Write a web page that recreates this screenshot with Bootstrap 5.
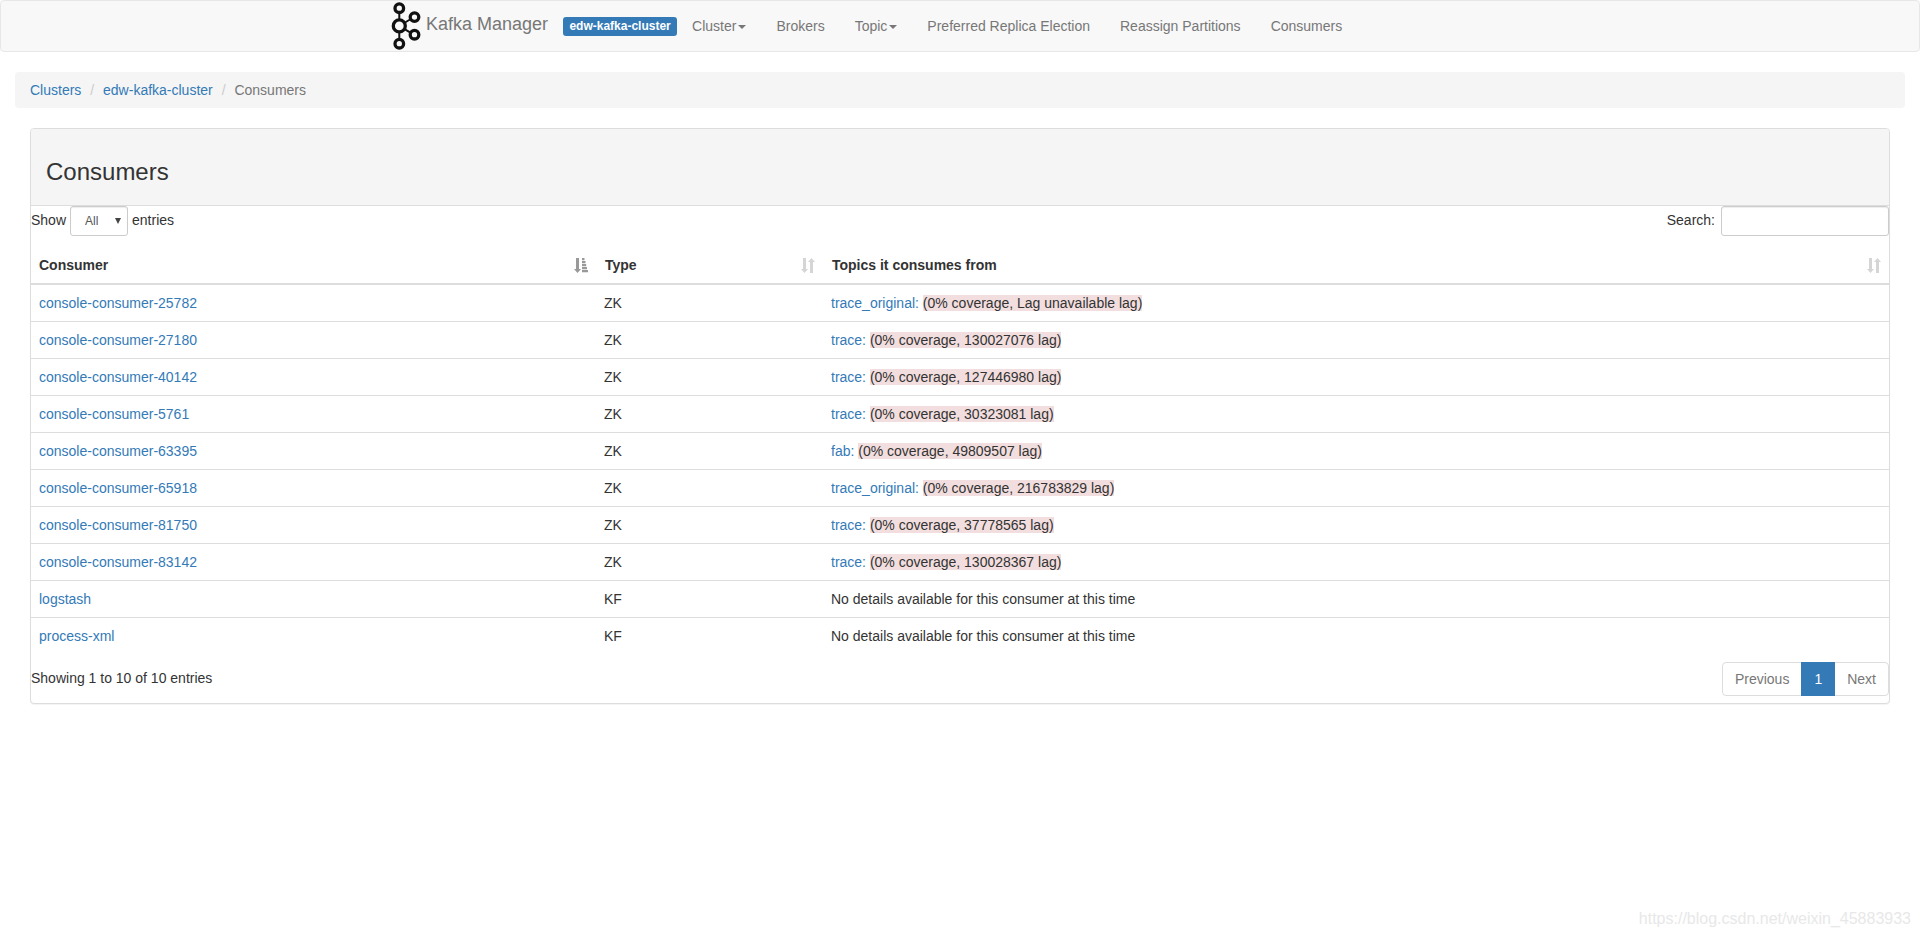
<!DOCTYPE html>
<html lang="en">
<head>
<meta charset="utf-8">
<meta name="viewport" content="width=device-width, initial-scale=1">
<title>Kafka Manager</title>
<link href="https://cdn.jsdelivr.net/npm/bootstrap@5.3.0/dist/css/bootstrap.min.css" rel="stylesheet">
<style>
body{font:14px/20px "Liberation Sans",Arial,sans-serif;color:#333;background:#fff;min-height:100vh;overflow:hidden}
a{color:#337ab7;text-decoration:none}
.topnav{height:52px;background:#f8f8f8;border:1px solid #e7e7e7;border-radius:4px;margin-bottom:20px;padding:0 0 0 389px}
.topnav .navbar-brand{height:50px;font-size:18px;line-height:20px;color:#777;padding:0;margin:0 15px 0 0}
.topnav .navbar-brand span{margin:-4px 0 0 4px}
.topnav .nav-link{color:#777;padding:15px!important;line-height:20px}
.topnav .dropdown-toggle::after{border-top:4px solid;border-right:4px solid transparent;border-left:4px solid transparent;margin:0 0 0 2px;vertical-align:middle}
.cluster-label{font-size:12px;line-height:12px;padding:3px 6px 4px;height:19px;width:114px;border-radius:3px;background:#337ab7}
.crumbs{background:#f5f5f5;padding:8px 15px;border-radius:4px;margin:0 15px 20px;display:block;height:36px}
.crumbs .breadcrumb-item{display:inline-block;padding:0}
.crumbs .breadcrumb-item+.breadcrumb-item::before{content:"/\00a0";padding:0 5px;color:#ccc;float:none}
.crumbs .active{color:#777}
.panel-box{margin:0 30px;border:1px solid #ddd;border-radius:4px;box-shadow:0 1px 1px rgba(0,0,0,.05);height:576px}
.panel-box .card-header{background:#f5f5f5;border-bottom:1px solid #ddd;padding:30px 15px 20px;height:77px;border-radius:3px 3px 0 0}
.panel-box h3{font-size:24px;line-height:26px;font-weight:400;margin:0}
.tools{height:41px}
.tools label{height:30px;line-height:28px}
.tools .form-select,.tools .form-control{height:30px;font-size:12px;line-height:18px;border:1px solid #ccc;border-radius:3px;box-shadow:inset 0 1px 1px rgba(0,0,0,.075);color:#555;min-height:0}
.tools .form-select{width:58px;padding:5px 10px 5px 14px;margin:0 4px;background-image:url("data:image/svg+xml,%3Csvg xmlns='http://www.w3.org/2000/svg' viewBox='0 0 6 6'%3E%3Cpath fill='%23444' d='M0 0h6L3 6z'/%3E%3C/svg%3E");background-size:6px 6px;background-position:right 6px center}
.tools .form-control{width:168px;margin-left:6px}
.consumers{table-layout:fixed;border-collapse:separate;border-spacing:0;margin:0 0 6px;color:#333;width:100%}
.consumers>:not(caption)>*>*{padding:8px;border:0;line-height:20px;color:#333}
.consumers>thead>tr>th{border-bottom:2px solid #ddd;height:38px}
.consumers>thead>tr>th+th{padding-left:9px}
.consumers>tbody>tr+tr>td{border-top:1px solid #ddd}
.consumers a{color:#337ab7}
.sorter{width:14px;height:15px;fill:#d5d5d5}
.sorter.on{fill:#999}
.lag{background:#f2dede}
.foot .info{padding-top:8px}
.foot .pagination{margin:2px 0 0}
.foot .page-link{font-size:14px;line-height:20px;padding:6px 12px;color:#777;border-color:#ddd;background:#fff}
.foot .page-item:first-child .page-link{border-radius:4px 0 0 4px}
.foot .page-item:last-child .page-link{border-radius:0 4px 4px 0}
.foot .active>.page-link{background:#337ab7;border-color:#337ab7;color:#fff}
.watermark{position:absolute;right:9px;bottom:8px;font-size:16px;line-height:20px;color:#e8e8e8}
</style>
</head>
<body class="position-relative">
<nav class="topnav d-flex align-items-start">
  <a class="navbar-brand d-flex align-items-center" href="#">
    <svg width="32" height="50" viewBox="390 1 32 50" fill="none" stroke="#111"><path stroke-width="2" d="M399.300 13v6M399.300 32v7M405 22.500l5-3M405 29.300l5 3"/><g stroke-width="3.300"><circle cx="399.300" cy="8.200" r="4.300"/><circle cx="399.300" cy="43.700" r="4.300"/><circle cx="414.500" cy="17.100" r="4.300"/><circle cx="414.500" cy="34.700" r="4.300"/><circle cx="399.300" cy="25.900" r="6"/></g></svg>
    <span>Kafka Manager</span>
  </a>
  <span class="badge cluster-label mt-3">edw-kafka-cluster</span>
  <ul class="nav flex-nowrap">
    <li class="nav-item"><a class="nav-link dropdown-toggle" href="#">Cluster</a></li>
    <li class="nav-item"><a class="nav-link" href="#">Brokers</a></li>
    <li class="nav-item"><a class="nav-link dropdown-toggle" href="#">Topic</a></li>
    <li class="nav-item"><a class="nav-link" href="#">Preferred Replica Election</a></li>
    <li class="nav-item"><a class="nav-link" href="#">Reassign Partitions</a></li>
    <li class="nav-item"><a class="nav-link" href="#">Consumers</a></li>
  </ul>
</nav>
<ol class="breadcrumb crumbs">
  <li class="breadcrumb-item"><a href="#">Clusters</a></li>
  <li class="breadcrumb-item"><a href="#">edw-kafka-cluster</a></li>
  <li class="breadcrumb-item active">Consumers</li>
</ol>
<main class="card panel-box">
  <div class="card-header"><h3>Consumers</h3></div>
  <div class="tools d-flex justify-content-between align-items-start">
    <label class="d-flex">Show <select class="form-select"><option>All</option></select> entries</label>
    <label class="d-flex">Search:<input type="search" class="form-control"></label>
  </div>
  <table class="table consumers">
    <colgroup><col style="width:565px"><col style="width:227px"><col></colgroup>
    <thead><tr>
      <th><div class="d-flex justify-content-between align-items-center">Consumer<svg class="sorter on" viewBox="0 0 14 15"><path d="M2 0h3v11h2l-3.500 4L0 11h2zM8 0h2.500v2.200H8zM8 3h3.500v2.200H8zM8 6h4.200v2.200H8zM8 9h5v2.200H8zM8 12h6v2.200H8z"/></svg></div></th>
      <th><div class="d-flex justify-content-between align-items-center">Type<svg class="sorter" viewBox="0 0 14 15"><path d="M2 0h3v11h2l-3.500 4L0 11h2zM9 15h3V4h2l-3.500-4L7 4h2z"/></svg></div></th>
      <th><div class="d-flex justify-content-between align-items-center">Topics it consumes from<svg class="sorter" viewBox="0 0 14 15"><path d="M2 0h3v11h2l-3.500 4L0 11h2zM9 15h3V4h2l-3.500-4L7 4h2z"/></svg></div></th>
    </tr></thead>
    <tbody>
      <tr><td><a href="#">console-consumer-25782</a></td><td>ZK</td><td><a href="#">trace_original:</a> <span class="lag">(0% coverage, Lag unavailable lag)</span></td></tr>
      <tr><td><a href="#">console-consumer-27180</a></td><td>ZK</td><td><a href="#">trace:</a> <span class="lag">(0% coverage, 130027076 lag)</span></td></tr>
      <tr><td><a href="#">console-consumer-40142</a></td><td>ZK</td><td><a href="#">trace:</a> <span class="lag">(0% coverage, 127446980 lag)</span></td></tr>
      <tr><td><a href="#">console-consumer-5761</a></td><td>ZK</td><td><a href="#">trace:</a> <span class="lag">(0% coverage, 30323081 lag)</span></td></tr>
      <tr><td><a href="#">console-consumer-63395</a></td><td>ZK</td><td><a href="#">fab:</a> <span class="lag">(0% coverage, 49809507 lag)</span></td></tr>
      <tr><td><a href="#">console-consumer-65918</a></td><td>ZK</td><td><a href="#">trace_original:</a> <span class="lag">(0% coverage, 216783829 lag)</span></td></tr>
      <tr><td><a href="#">console-consumer-81750</a></td><td>ZK</td><td><a href="#">trace:</a> <span class="lag">(0% coverage, 37778565 lag)</span></td></tr>
      <tr><td><a href="#">console-consumer-83142</a></td><td>ZK</td><td><a href="#">trace:</a> <span class="lag">(0% coverage, 130028367 lag)</span></td></tr>
      <tr><td><a href="#">logstash</a></td><td>KF</td><td>No details available for this consumer at this time</td></tr>
      <tr><td><a href="#">process-xml</a></td><td>KF</td><td>No details available for this consumer at this time</td></tr>
    </tbody>
  </table>
  <div class="foot d-flex justify-content-between align-items-start">
    <div class="info">Showing 1 to 10 of 10 entries</div>
    <ul class="pagination">
      <li class="page-item"><a class="page-link" href="#">Previous</a></li>
      <li class="page-item active"><a class="page-link" href="#">1</a></li>
      <li class="page-item"><a class="page-link" href="#">Next</a></li>
    </ul>
  </div>
</main>
<div class="watermark">https://blog.csdn.net/weixin_45883933</div>
<script src="https://cdn.jsdelivr.net/npm/bootstrap@5.3.0/dist/js/bootstrap.bundle.min.js"></script>
</body>
</html>
